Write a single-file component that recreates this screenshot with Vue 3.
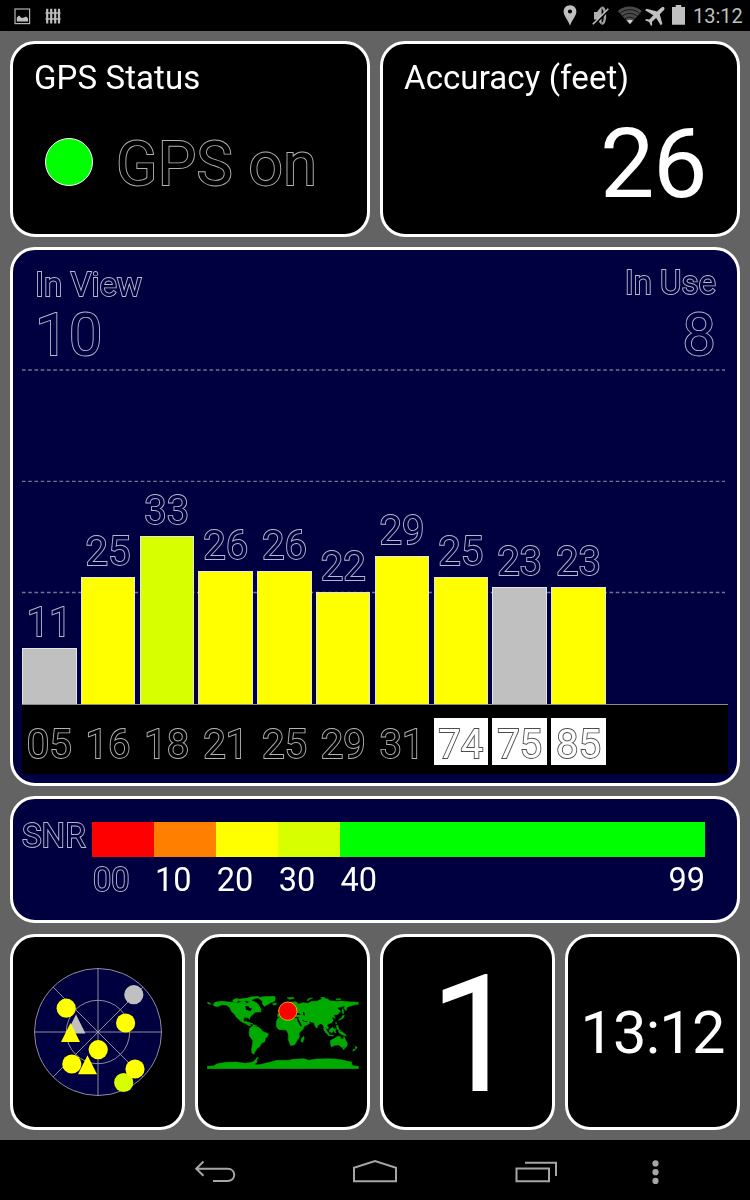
<template>
  <div class="screen">
    <header class="status-bar">
      <div class="notifications">
        <svg class="icon-picture" width="17" height="17" viewBox="0 0 17 17">
          <rect x="1" y="1" width="14.6" height="14.6" fill="none" stroke="#b4b4b4" stroke-width="1.2" />
          <path d="M2.8 13.400V9.400L5 7.600 7.600 10l2.400-.6 2-.9L14 10.200V13.400z" fill="#c0c0c0" />
        </svg>
        <svg class="icon-fence" width="16" height="16" viewBox="0 0 16 16">
          <path d="M2.200 .8v14.700M6.200 .8v14.700M10.200 .8v14.700M14 .8v14.700" stroke="#bdbdbd" stroke-width="2.200" />
          <path d="M.5 5h15M.5 11h15" stroke="#bdbdbd" stroke-width="1.400" />
        </svg>
      </div>
      <svg class="system-icons" width="130" height="31" viewBox="560 0 130 31">
        <path fill="#c0c0c0" fill-rule="evenodd" d="M570 5.200c-3.600 0-6.400 2.800-6.400 6.300 0 4.300 4.400 8 6.400 14.300 2-6.300 6.400-10 6.400-14.300 0-3.500-2.800-6.300-6.400-6.300zm0 4.200a2.100 2.100 0 1 1 0 4.200 2.100 2.100 0 0 1 0-4.200z" />
        <path fill="#b0b0b0" d="M594 12h3l4.600-5.700v18.600L597 19.500h-3z" />
        <path d="M602 7.500c4 1 4 15 0 16.500" fill="none" stroke="#a0a0a0" stroke-width="2.400" />
        <path d="M593.500 25.500 609 9.500" stroke="#000" stroke-width="2" />
        <path d="M592.800 24.200 608.300 8.800" stroke="#c0c0c0" stroke-width="1.600" />
        <path fill="#4a4a4a" d="M617.800 11c6-6 18-6 24 0L630 24.500z" />
        <path d="M620 13.200c5-4.600 14.500-4.600 19.500 0M622.400 16c4-3.400 10.800-3.400 14.800 0M625 18.900c3-2.300 6.600-2.300 9.600 0" fill="none" stroke="#161616" stroke-width="1" />
        <path fill="#d0d0d0" d="M626.900 20.600c1.600-1.300 4.400-1.300 6 0l-3 3.500z" />
        <path fill="#c0c0c0" d="M664.200 7.400c-1.100-1-2.800-.1-4 1.100l-3.100 3-10.500-2.700-1.500 1.500 8.300 5-4 4.100-3.200-.4-1.200 1.200 4.200 1.900 1.800 4 1.200-1.200-.2-3.100 4.100-3.900 4.700 7.300 1.500-1.400-2.500-9.500 3.200-3.200c1.200-1.200 2-2.700 1.200-3.700z" />
        <path fill="#c0c0c0" d="M675.700 5h5.600v2h3.700v17.800h-13V7h3.700z" />
      </svg>
      <span class="clock">13:12</span>
    </header>

    <main class="dashboard">
      <div class="row top-row">
        <section class="card">
          <h2 class="card-title">GPS Status</h2>
          <div class="gps-state">
            <span class="lamp"></span>
            <span class="gps-text outline">GPS on</span>
          </div>
        </section>
        <section class="card">
          <h2 class="card-title">Accuracy (feet)</h2>
          <div class="accuracy">26</div>
        </section>
      </div>

      <section class="card blue chart">
        <div class="plot">
          <svg class="grid-lines" width="706" height="455" viewBox="0 0 706 455">
            <path d="M0 120h703M0 231.300h703M0 342.500h703" />
          </svg>
          <div class="totals">
            <div class="total">
              <div class="total-label outline">In View</div>
              <div class="total-value outline">10</div>
            </div>
            <div class="total in-use">
              <div class="total-label outline">In Use</div>
              <div class="total-value outline">8</div>
            </div>
          </div>
          <div class="bars">
            <div v-for="sat in satellites" :key="sat.prn" class="bar-column">
              <span class="digits outline">{{ sat.snr }}</span>
              <div class="bar" :class="sat.level" :style="{ height: sat.snr * 5.1 + 'px' }"></div>
            </div>
          </div>
        </div>
        <div class="axis">
          <div
            v-for="sat in satellites"
            :key="sat.prn"
            class="prn digits outline"
            :class="{ glonass: sat.glonass }"
          >{{ sat.prn }}</div>
        </div>
      </section>

      <section class="card blue snr">
        <div class="snr-label outline">SNR</div>
        <div class="scale">
          <div v-for="step in scale" :key="step.from" class="step" :class="step.level">
            <div class="swatch"></div>
            <div class="step-labels">
              <span :class="{ outline: step.from === '00' }">{{ step.from }}</span>
              <span v-if="step.to" class="last">{{ step.to }}</span>
            </div>
          </div>
        </div>
      </section>

      <div class="row bottom-row">
        <section class="card tile">
          <svg width="130" height="130" viewBox="-65 -65 130 130">
            <circle r="63.500" fill="#000040" />
            <g fill="none" stroke="#9c9ca6" stroke-width="0.900">
              <circle r="63.500" />
              <circle r="31.700" />
              <path d="M-63.500 0h127M0-63.500v127M-44.900-44.900l89.800 89.800M44.900-44.900l-89.800 89.800" />
            </g>
            <template v-for="(dot, i) in sky" :key="i">
              <path v-if="dot.glonass" :class="dot.level" :transform="`translate(${dot.x} ${dot.y})`" d="M0-9.500 9.500 9.500h-19z" />
              <circle v-else :class="dot.level" :cx="dot.x" :cy="dot.y" r="9.600" />
            </template>
          </svg>
        </section>

        <section class="card tile">
          <svg class="world" width="152" height="73" viewBox="35 50 456 219">
            <g fill="#00aa00" stroke="#00aa00" stroke-width="1.500">
              <!-- North America, Arctic islands and Greenland -->
              <path d="M54 74 60 68 80 66 110 69 140 71 160 72 166 66 178 68 184 76 192 84 198 92 188 97 180 99 174 104 168 109 163 115 163 121 158 115 148 114 144 120 147 127 154 125 155 129 160 134 167 139 158 138 150 132 138 127 130 120 122 112 118 105 108 96 104 85 94 78 80 76 66 82 56 80z" />
              <path d="M36 69l8 2 3 4-9-2zM112 62l12-5 8 4-7 7-11 0zM128 60l22-3 7 4-9 5-15 0zM132 69l13-3 8 4-10 4zM150 58l16-5 22-2 5 3-18 5-9 7-13-2zM158 67l13-2 13 5 8 9 5 12-10-5-5-8-10-5-11 0z" />
              <path d="M188 56 202 52 238 51 240 57 238 66 226 70 214 78 207 81 201 74 201 65 194 60zM232 72l12 0-3 5-8-1zM186 98l7-7 5 7zM145 131l14-3 14 6-8 1-12-4zM173 136l11 3-10 2z" />
              <!-- South America -->
              <path d="M163 147 172 140 186 142 198 150 201 156 219 163 218 169 211 177 208 187 199 192 192 203 184 208 182 214 178 217 176 225 169 220 169 208 173 184 163 171 161 160z" />
              <!-- Africa and Madagascar -->
              <path d="M243 126 249 115 262 110 278 110 290 116 304 117 308 128 315 141 327 140 323 150 311 161 312 174 304 186 298 196 286 199 279 181 279 165 273 152 262 151 251 151 243 142zM324 171l3 5-5 13-5-2 1-9z" />
              <!-- Eurasia -->
              <path d="M247 104 258 103 258 95 268 88 276 76 286 68 302 67 310 74 322 70 338 72 350 66 364 66 380 59 396 58 404 64 422 66 440 65 456 67 489 69 489 75 472 78 464 81 455 84 452 94 446 87 449 79 437 83 425 86 436 95 428 105 415 107 420 118 413 114 410 116 414 124 408 131 398 134 395 138 400 145 395 150 390 146 391 153 395 161 387 153 386 143 382 136 376 133 368 138 365 147 360 142 356 130 344 127 340 127 344 131 335 137 322 142 309 119 312 114 301 112 296 106 288 110 280 102 264 104 256 113 247 112z" />
              <path d="M250 93l5-8 6 6 0 6-10 1zM275 55l19-1 3 3-15 3zM336 62l5-5 11-1-9 4-6 5zM376 55l10-1 6 4-12 1zM424 58l12 0 0 3-14 0zM441 88l4 5-1 11-4-7zM441 109l6-1-3 8-10 6-5 0 10-7zM421 129l3 1-2 5z" />
              <!-- Indonesia, Philippines, Australia and New Zealand -->
              <path d="M384 146l6 3 13 16-4 2-9-8zM402 151l10-7 4 5-5 11-9-3zM415 150l7-2-2 7 2 6-5-2zM398 167l16 1 0 2-14-1zM423 138l5 1 2 10 5 4-2 3-8-8zM430 155l10 2 9 7 5 6-14-4-10-7z" />
              <path d="M406 183 418 177 427 171 435 172 437 178 443 180 446 171 451 183 456 191 455 200 448 206 438 204 431 197 420 198 408 202 405 193zM442 207l6 0-3 5zM480 200l6 5-5 5zM474 210l6-1-4 6-4-1z" />
              <!-- Antarctica -->
              <path d="M36 268 36 261 54 260 66 253 92 249 122 248 150 252 170 249 180 242 183 236 189 234 184 243 186 248 176 255 186 257 210 252 230 247 244 243 280 243 294 240 326 238 340 243 362 239 398 238 420 239 442 242 456 246 470 248 468 254 474 259 489 261 489 268z" />
            </g>
            <g fill="#000">
              <path d="M150 80l8 0 6 7 6 0-4 9-4-2-10-3zM303 100l9 2 5 4-7 0-7 2zM323 97l5 4 0 8-5-3zM306 120l3 0 9 17-2 2zM320 120l9 6 7-1-3 4-10-4z" />
            </g>
            <circle cx="277.500" cy="95.500" r="27.500" fill="#f00" stroke="#f7c600" stroke-width="2.500" />
          </svg>
        </section>

        <section class="card tile">
          <span class="fix-count">1</span>
        </section>
        <section class="card tile">
          <span class="big-clock">13:12</span>
        </section>
      </div>
    </main>

    <nav class="nav-bar">
      <svg width="750" height="60" viewBox="0 1140 750 60" fill="none" stroke="#a6a6a6" stroke-width="2">
        <path d="M197 1168.700h30.500c9 0 9 12.300 0 12.300H213M203.500 1161.500l-7.300 7.200 7.300 7" />
        <path d="M354 1181.300v-13.600l21-6.600 21 6.600v13.600z" />
        <path d="M516.500 1168.500h32.500v12.800h-32.500zM525 1162.800h31v13.200" />
        <g fill="#a6a6a6" stroke="none">
          <circle cx="655.500" cy="1163.400" r="3.100" />
          <circle cx="655.500" cy="1172.200" r="3.100" />
          <circle cx="655.500" cy="1180.900" r="3.100" />
        </g>
      </svg>
    </nav>
  </div>
</template>

<script setup>
const satellites = [
  { prn: '05', snr: 11, level: 'unused' },
  { prn: '16', snr: 25, level: 'fair' },
  { prn: '18', snr: 33, level: 'good' },
  { prn: '21', snr: 26, level: 'fair' },
  { prn: '25', snr: 26, level: 'fair' },
  { prn: '29', snr: 22, level: 'fair' },
  { prn: '31', snr: 29, level: 'fair' },
  { prn: '74', snr: 25, level: 'fair', glonass: true },
  { prn: '75', snr: 23, level: 'unused', glonass: true },
  { prn: '85', snr: 23, level: 'fair', glonass: true }
]

const scale = [
  { from: '00', level: 'bad' },
  { from: '10', level: 'poor' },
  { from: '20', level: 'fair' },
  { from: '30', level: 'good' },
  { from: '40', to: '99', level: 'best' }
]

// offsets from the zenith, in pixels
const sky = [
  { x: 35.8, y: -37.3, level: 'unused' },
  { x: -31.8, y: -23.8, level: 'fair' },
  { x: -22, y: -8, level: 'unused', glonass: true },
  { x: -27.5, y: 0.5, level: 'fair', glonass: true },
  { x: 27.6, y: -9, level: 'fair' },
  { x: 0.2, y: 17.7, level: 'fair' },
  { x: -26.2, y: 32, level: 'fair' },
  { x: -10.5, y: 32.7, level: 'fair', glonass: true },
  { x: 25.7, y: 50.5, level: 'good' },
  { x: 37, y: 37, level: 'fair' }
]
</script>

<style>
body {
  margin: 0;
  background: #636363;
}
</style>

<style scoped>
.screen {
  width: 750px;
  height: 1200px;
  display: flex;
  flex-direction: column;
  background: #636363;
  color: #fff;
  font-family: Roboto, "Liberation Sans", sans-serif;
  overflow: hidden;
}

/* hollow lettering: the fill is painted over the inner half of the stroke */
.outline {
  color: #000;
  paint-order: stroke fill;
  -webkit-text-stroke: 1.8px #b4b4b4;
}

.blue .outline {
  color: #000040;
  -webkit-text-stroke-color: #b8b8cc;
}

.unused { --level: #c0c0c0; fill: #c0c0c0; }
.bad { --level: #ff0000; }
.poor { --level: #ff8000; }
.fair { --level: #ffff00; fill: #ffff00; }
.good { --level: #d8ff00; fill: #d8ff00; }
.best { --level: #00ff00; }

/* status bar */
.status-bar {
  height: 31px;
  flex: none;
  display: flex;
  align-items: center;
  background: #000;
}

.notifications {
  flex: 1;
  display: flex;
  gap: 14px;
  padding: 1px 0 0 14px;
}

.clock {
  width: 60px;
  padding: 1px 0 0 3px;
  box-sizing: border-box;
  font-size: 20px;
  line-height: 30px;
  color: #bebebe;
}

/* cards */
.dashboard {
  flex: 1;
  display: flex;
  flex-direction: column;
  gap: 10px;
  padding: 10px 10px 0;
  will-change: transform;
}

.row {
  display: flex;
  gap: 10px;
  height: 196px;
}

.bottom-row {
  margin-top: 1px;
}

.card {
  flex: 1;
  box-sizing: border-box;
  min-width: 0;
  border: 3px solid #fff;
  border-radius: 25px;
  background: #000;
}

.card.blue {
  flex: none;
  background: #000040;
}

.card-title {
  margin: 13px 0 0 21px;
  font-size: 33px;
  font-weight: 400;
  letter-spacing: 0.1px;
  line-height: 41px;
}

.gps-state {
  display: flex;
  align-items: center;
  gap: 23px;
  margin: 24px 0 0 32px;
  height: 80px;
}

.lamp {
  width: 46px;
  height: 46px;
  border: 1px solid #fff;
  border-radius: 50%;
  background: #00ff00;
}

.gps-text {
  font-size: 61px;
  letter-spacing: 0.2px;
  line-height: 80px;
  padding-top: 3px;
}

.accuracy {
  margin-top: 6px;
  padding-right: 31px;
  text-align: right;
  font-size: 97px;
  letter-spacing: -1.5px;
  line-height: 120px;
}

/* satellite chart */
.chart {
  height: 539px;
  padding: 0 9px;
}

.plot {
  position: relative;
  height: 454px;
  display: flex;
  flex-direction: column;
  justify-content: space-between;
}

.grid-lines {
  position: absolute;
  left: 0;
  top: 0;
  fill: none;
  stroke: #74748f;
  stroke-width: 1.3;
  stroke-dasharray: 3.6 2.65;
}

.totals {
  display: flex;
  justify-content: space-between;
  height: 0;
  padding: 17px 12px 0 13px;
}

.total-label {
  font-size: 33px;
  line-height: 36px;
}

.total-value {
  font-size: 60px;
  line-height: 63px;
}

.in-use {
  text-align: right;
}

.in-use .total-label {
  margin: -2px 0 2px;
}

.bars,
.axis {
  display: flex;
  gap: 4.3px;
}

.bars {
  position: relative;
  align-items: flex-end;
}

.bar-column,
.prn {
  width: 54.5px;
  flex: none;
  text-align: center;
}

.digits {
  font-size: 40px;
  line-height: 40px;
}

.bar-column .digits {
  display: block;
  margin-bottom: 5px;
}

.bar {
  box-sizing: border-box;
  border: 1px solid #e4e4e4;
  border-bottom: 0;
  background: var(--level);
}

.axis {
  height: 70px;
  padding-top: 13px;
  box-sizing: border-box;
  border-top: 1px solid #8c8c8c;
  background: #000;
}

.blue .prn {
  height: 47px;
  line-height: 53px;
  color: #000;
  -webkit-text-stroke-color: #b4b4b4;
}

.blue .prn.glonass {
  background: #fff;
  color: #fff;
  -webkit-text-stroke-color: #4c4c4c;
}

/* SNR legend */
.snr {
  height: 127px;
  display: flex;
  padding: 23px 0 0 9px;
}

.snr-label {
  width: 70px;
  margin-top: -2px;
  font-size: 33px;
  line-height: 32px;
}

.scale {
  display: flex;
  width: 613px;
}

.step {
  width: 61.9px;
}

.step.best {
  flex: 1;
}

.swatch {
  height: 35px;
  background: var(--level);
}

.step-labels {
  display: flex;
  justify-content: space-between;
  padding-left: 1px;
  font-size: 32.5px;
  line-height: 46px;
}

/* bottom tiles */
.tile {
  display: flex;
  align-items: center;
  justify-content: center;
}

.fix-count {
  padding: 6px 0 0 15px;
  font-size: 164px;
  line-height: 184px;
}

.big-clock {
  padding-top: 2px;
  font-size: 59.5px;
  letter-spacing: -0.8px;
  line-height: 80px;
}

.nav-bar {
  height: 60px;
  flex: none;
  background: #000;
}
</style>
